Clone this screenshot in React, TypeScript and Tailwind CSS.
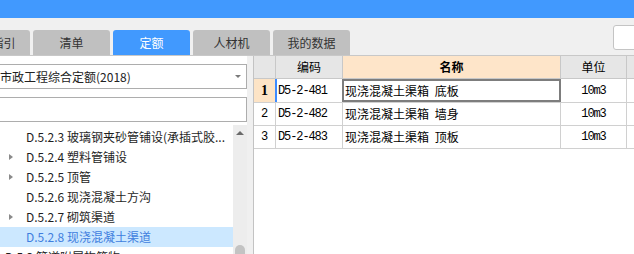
import React from "react";

const tabs = [
  { label: "清单指引", active: false },
  { label: "清单", active: false },
  { label: "定额", active: true },
  { label: "人材机", active: false },
  { label: "我的数据", active: false },
];

const tree = [
  { label: "D.5.2.3 玻璃钢夹砂管铺设(承插式胶...", arrow: false, level: 2, selected: false },
  { label: "D.5.2.4 塑料管铺设", arrow: true, level: 2, selected: false },
  { label: "D.5.2.5 顶管", arrow: true, level: 2, selected: false },
  { label: "D.5.2.6 现浇混凝土方沟", arrow: false, level: 2, selected: false },
  { label: "D.5.2.7 砌筑渠道", arrow: true, level: 2, selected: false },
  { label: "D.5.2.8 现浇混凝土渠道", arrow: false, level: 2, selected: true },
  { label: "D.5.3 管道附属构筑物", arrow: true, level: 1, selected: false },
];

const rows = [
  { n: "1", code: "D5-2-481", name: "现浇混凝土渠箱 底板", unit: "10m3" },
  { n: "2", code: "D5-2-482", name: "现浇混凝土渠箱 墙身", unit: "10m3" },
  { n: "3", code: "D5-2-483", name: "现浇混凝土渠箱 顶板", unit: "10m3" },
];

export default function App() {
  return (
    <div className="w-[634px] h-[254px] overflow-hidden bg-white flex flex-col font-['Noto_Sans_CJK_SC',sans-serif] text-[12px]">
      <div className="h-[18px] shrink-0 bg-[#4199fe]" />
      <div className="h-[38px] shrink-0 bg-[#f0f0f0] border-b border-[#c8c8c8] flex items-end">
        <div className="flex gap-[3px] ml-[-47px]">
          {tabs.map((t) => (
            <div
              key={t.label}
              className={`w-[77px] h-[25px] rounded-t-[3px] flex items-center justify-center leading-none ${
                t.active ? "bg-[#4199fe] text-white" : "bg-[#c0c0c0] text-[#333]"
              }`}
            >
              {t.label}
            </div>
          ))}
        </div>
        <div className="ml-auto self-start mt-[7px] w-[30px] h-[25px] mr-[-9px] bg-white border border-[#c4c4c4] rounded-[3px]" />
      </div>
      <div className="flex flex-1 min-h-0">
        <div className="w-[247px] shrink-0 bg-white flex flex-col overflow-hidden">
          <div className="mt-[8px] ml-[-44px] w-[291px] h-[25px] shrink-0 border border-[#adadad] bg-white flex items-center pl-[7px] pr-[5px] text-[#222] whitespace-nowrap">
            <span className="flex-1">广东省市政工程综合定额(2018)</span>
            <span className="w-0 h-0 border-l-[3px] border-r-[3px] border-t-[3px] border-l-transparent border-r-transparent border-t-[#7a7a7a]" />
          </div>
          <div className="mt-[8px] ml-[-44px] w-[291px] h-[25px] shrink-0 border border-[#adadad] bg-white" />
          <div className="mt-[3px] flex flex-1 min-h-0">
            <div className="flex-1 pt-[2px] overflow-hidden">
              {tree.map((r) => (
                <div
                  key={r.label}
                  className={`h-[20px] flex items-center whitespace-nowrap ${
                    r.level === 2 ? "pl-[9px]" : "ml-[-12px]"
                  } ${r.selected ? "bg-[#cce8ff] text-[#3f7ede]" : "text-[#1e1e1e]"}`}
                >
                  <span className="w-[17px] shrink-0 flex items-center">
                    {r.arrow && (
                      <span className="w-0 h-0 border-t-[3.5px] border-b-[3.5px] border-l-[4px] border-t-transparent border-b-transparent border-l-[#8a8a8a]" />
                    )}
                  </span>
                  <span>{r.label}</span>
                </div>
              ))}
            </div>
            <div className="w-[14px] shrink-0 bg-[#ededed] flex flex-col items-center">
              <span className="mt-[6px] w-0 h-0 border-l-[4px] border-r-[4px] border-b-[4px] border-l-transparent border-r-transparent border-b-[#6a6a6a]" />
              <span className="mt-[110px] w-[10px] h-[20px] shrink-0 rounded-full bg-[#c3c3c3]" />
            </div>
          </div>
        </div>
        <div className="w-[6px] shrink-0 bg-[#f0f0f0]" />
        <div className="flex-1 border-l border-[#c3c3c3] bg-white flex flex-col">
          <div className="h-[23px] flex border-b border-[#c8c8c8] bg-[#e6e6e6] text-[12px] text-black shrink-0">
            <div className="w-[22px] shrink-0 border-r border-[#c8c8c8]" />
            <div className="w-[67px] shrink-0 border-r border-[#c8c8c8] flex items-center justify-center">编码</div>
            <div className="w-[218px] shrink-0 border-r border-[#c8c8c8] bg-[#fee5c9] flex items-center justify-center font-bold">名称</div>
            <div className="w-[66px] shrink-0 border-r border-[#c8c8c8] flex items-center justify-center">单位</div>
            <div className="flex-1" />
          </div>
          {rows.map((r, i) => (
            <div key={r.n} className={`${i === 0 ? "h-[24px]" : "h-[23px]"} flex border-b border-[#d0d0d0] shrink-0 text-black`}>
              <div
                className={`w-[22px] shrink-0 border-r flex items-center justify-center ${
                  i === 0
                    ? "bg-[#fde4c6] border-[#3d8bff] font-['Liberation_Serif',serif] font-bold text-[14px]"
                    : "border-[#d0d0d0] font-['Liberation_Mono',monospace] text-[12px]"
                }`}
              >
                {r.n}
              </div>
              <div
                className={`w-[67px] shrink-0 border-r border-[#d0d0d0] flex items-center pl-[2px] font-['Liberation_Mono',monospace] text-[12px] tracking-[-1.1px] ${
                  i === 0 ? "shadow-[inset_1px_0_0_#3d8bff]" : ""
                }`}
              >
                {r.code}
              </div>
              <div className="w-[218px] shrink-0 border-r border-[#d0d0d0] flex items-center pl-[2px] relative [word-spacing:3px]">
                {r.name}
                {i === 0 && <div className="absolute left-[-1px] top-0 right-[-1px] bottom-0 border-2 border-[#7d7d7d]" />}
              </div>
              <div className="w-[66px] shrink-0 border-r border-[#d0d0d0] flex items-center justify-center font-['Liberation_Mono',monospace] text-[12px] tracking-[-1.1px]">
                {r.unit}
              </div>
              <div className="flex-1" />
            </div>
          ))}
        </div>
      </div>
    </div>
  );
}
